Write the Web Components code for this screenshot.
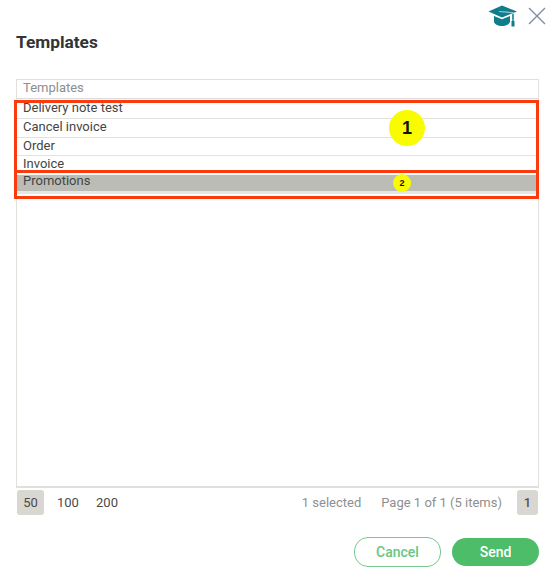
<!DOCTYPE html>
<html>
<head>
<meta charset="utf-8">
<title>Templates</title>
<style>
html, body { margin: 0; padding: 0; background: #fff; }
body { font-family: Roboto, "Liberation Sans", sans-serif; }
</style>
</head>
<body>
<template-dialog>
  <grid-row slot="rows" style="--row-pad:1px">Delivery note test</grid-row>
  <grid-row slot="rows" style="--row-h:19px">Cancel invoice</grid-row>
  <grid-row slot="rows" style="--row-h:18px">Order</grid-row>
  <grid-row slot="rows" style="--row-h:17px">Invoice</grid-row>
  <grid-row slot="rows" selected>Promotions</grid-row>
</template-dialog>

<script>
class GridRow extends HTMLElement {
  constructor() {
    super();
    this.attachShadow({ mode: "open" });
    this.shadowRoot.innerHTML = `
<style>
:host {
    display: block;
    box-sizing: border-box;
    height: var(--row-h, 20px);
    padding: var(--row-pad, 0) 0 0 6px;
    border-bottom: 1px solid #e2e2e2;
    font-size: 13px;
    line-height: 16px;
    color: #444;
}
:host([selected]) {
    height: 21px;
    padding-top: 1px;
    background: linear-gradient(#fff 0 2px, #babcb5 2px 18px, #e6e6e3 18px);
    border-bottom: 0;
    line-height: 14px;
}
</style>
<slot></slot>`;
  }
}
customElements.define("grid-row", GridRow);

class PagerBar extends HTMLElement {
  constructor() {
    super();
    this.attachShadow({ mode: "open" });
    this.shadowRoot.innerHTML = `
<style>
:host {
    display: flex;
    align-items: center;
    justify-content: space-between;
    height: 25px;
    margin-top: 2px;
    padding: 0 0 0 1px;
    font-size: 13px;
    color: #4a4a4a;
}
.sizes, .info { display: flex; align-items: center; }
.sizes span { height: 25px; line-height: 25px; text-align: center; border-radius: 3px; }
.s50 { width: 27px; background: #d9d7d2; }
.s100 { width: 21px; margin-left: 13px; }
.s200 { width: 22px; margin-left: 18px; }
.info { color: #8f8f8f; }
.info .pg { margin-left: 20px; }
.info b { font-weight: 500; color: #55534f; width: 21px; height: 25px; line-height: 25px; text-align: center; background: #d9d7d2; border-radius: 3px; margin-left: 15px; margin-right: 1px; }
</style>
<div class="sizes"><span class="s50">50</span><span class="s100">100</span><span class="s200">200</span></div>
<div class="info"><span>1 selected</span><span class="pg">Page 1 of 1 (5 items)</span><b>1</b></div>`;
  }
}
customElements.define("pager-bar", PagerBar);

class TemplateDialog extends HTMLElement {
  constructor() {
    super();
    this.attachShadow({ mode: "open" });
    this.shadowRoot.innerHTML = `
<style>
:host {
    display: block;
    position: relative;
    box-sizing: border-box;
    width: 552px;
    height: 582px;
    padding: 0 13px 0 16px;
    overflow: hidden;
    background: #fff;
}
.tools {
    display: flex;
    justify-content: flex-end;
    align-items: center;
    gap: 10px;
    height: 32px;
    margin-right: -7px;
}
h1 {
    margin: 0;
    height: 47px;
    padding-top: 1px;
    box-sizing: border-box;
    font-size: 17.3px;
    font-weight: 700;
    line-height: 18px;
    color: #333;
}
.grid {
    box-sizing: border-box;
    height: 409px;
    border: 1px solid #e1e1dc;
    border-bottom-width: 2px;
}
.head {
    box-sizing: border-box;
    height: 19px;
    padding-left: 6px;
    border-bottom: 1px solid #dcdcdc;
    font-size: 13px;
    line-height: 15px;
    color: #8e8e8e;
}
.foot {
    display: flex;
    justify-content: flex-end;
    gap: 11px;
    margin-top: 23px;
}
button {
    box-sizing: border-box;
    width: 87px;
    height: 28px;
    border-radius: 14px;
    font: 500 14px Roboto, "Liberation Sans", sans-serif;
    padding: 0;
}
.cancel { height: 30px; margin-top: -1px; background: #fff; border: 1px solid #75c98a; color: #6cc583; }
.send { background: #4dbd69; border: 0; color: #fff; }
.mark { position: absolute; box-sizing: border-box; border: 3px solid #fb3a0e; }
.m1 { left: 14px; top: 100px; width: 525px; height: 73px; }
.m2 { left: 14px; top: 170px; width: 525px; height: 29px; }
.dot {
    position: absolute;
    border-radius: 50%;
    background: #f9fb00;
    color: #111;
    font-family: "Liberation Sans", sans-serif;
    font-weight: 700;
    text-align: center;
}
.d1 { left: 389px; top: 110px; width: 36px; height: 36px; line-height: 37px; font-size: 18px; }
.d2 { left: 393px; top: 174px; width: 18px; height: 18px; line-height: 18px; font-size: 9px; }
</style>
<div class="tools">
    <svg width="30" height="22" viewBox="0 0 30 22">
        <path d="M14 0.5L29 6.5 14 12.5 0.5 6.5z" fill="#0f7d8c"/>
        <path d="M6 11v5.5c0 2.4 4 4.5 8 4.5s8-2.1 8-4.5V11l-8 3.3z" fill="#0f7d8c"/>
        <path d="M11 6.5l14 1.2v6.3" fill="none" stroke="#9cc9d0" stroke-width="1.2"/>
        <path d="M25 9v7" stroke="#0f7d8c" stroke-width="1.4"/>
        <rect x="23.5" y="16" width="3" height="5.5" fill="#0f7d8c"/>
    </svg>
    <svg width="18" height="18" viewBox="0 0 18 18">
        <path d="M1 1L17 17M17 1L1 17" stroke="#7d90a6" stroke-width="1.4" fill="none"/>
    </svg>
</div>
<h1>Templates</h1>
<div class="grid">
    <div class="head">Templates</div>
    <slot name="rows"></slot>
</div>
<pager-bar></pager-bar>
<div class="foot">
    <button class="cancel">Cancel</button>
    <button class="send">Send</button>
</div>
<div class="mark m1"></div>
<div class="mark m2"></div>
<div class="dot d1">1</div>
<div class="dot d2">2</div>`;
  }
}
customElements.define("template-dialog", TemplateDialog);
</script>
</body>
</html>
